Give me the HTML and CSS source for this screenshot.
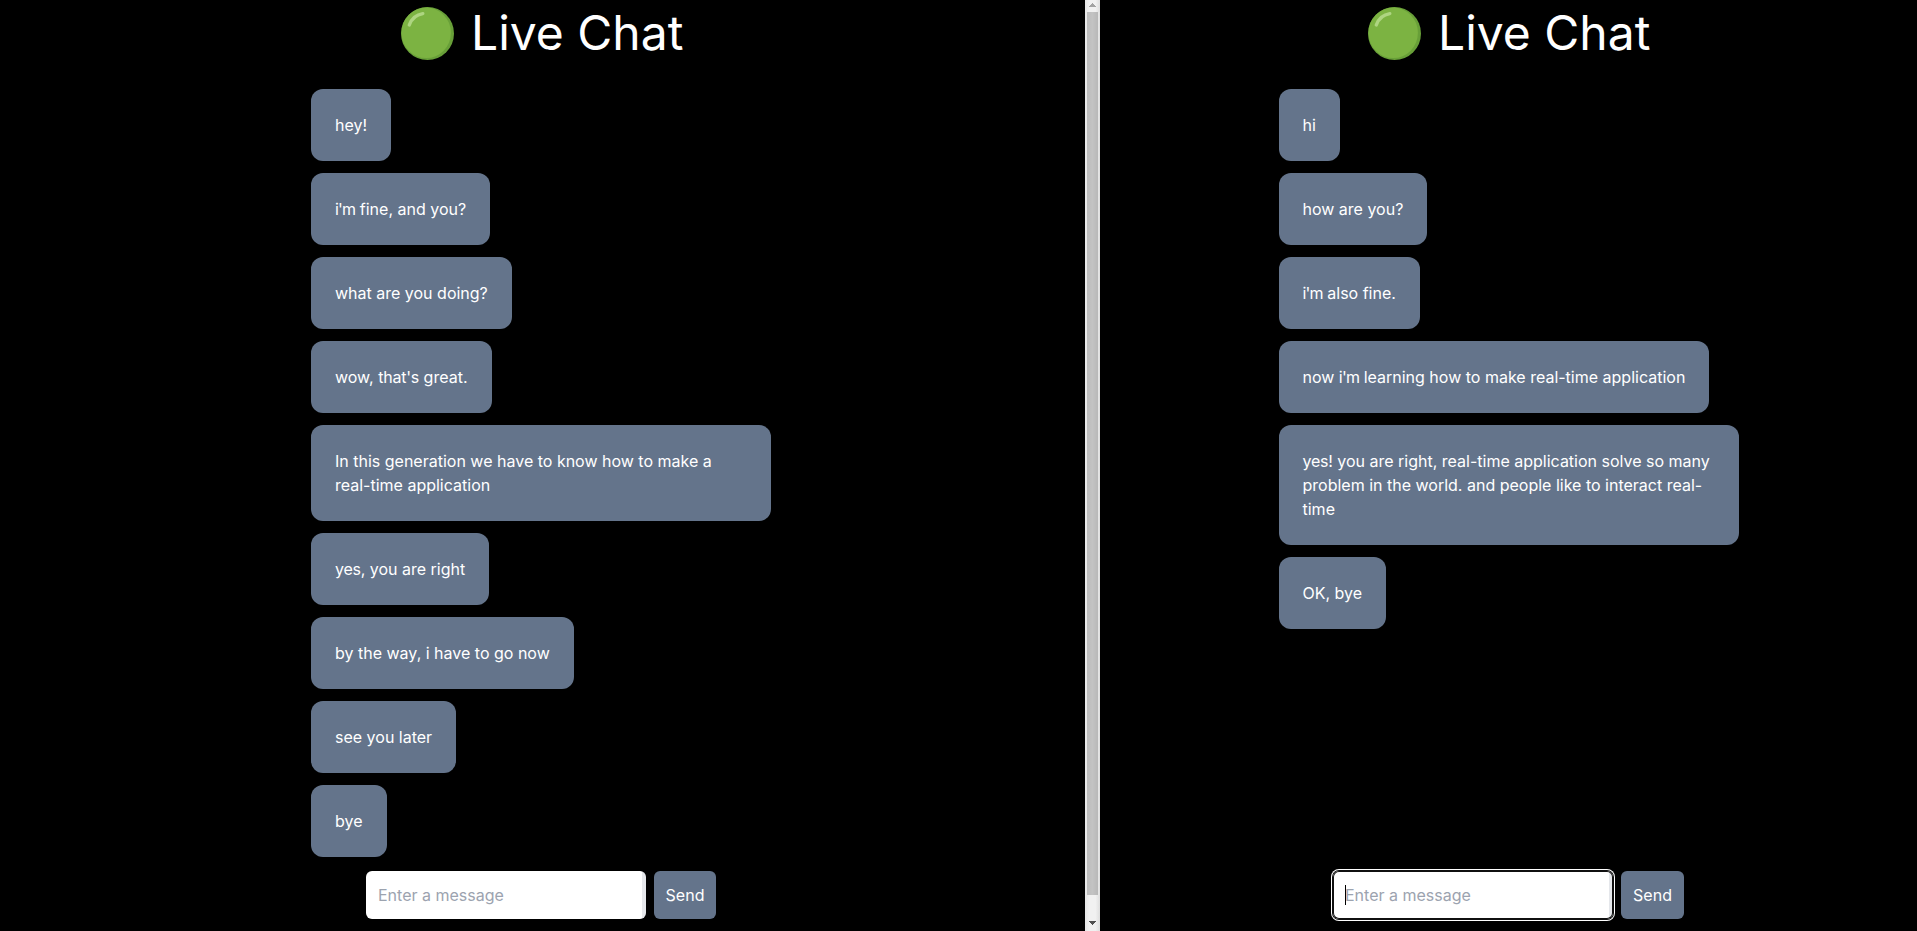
FILE: index.html
```html
<!DOCTYPE html>
<html lang="en">
<head>
<meta charset="utf-8">
<title>Live Chat</title>
<link rel="stylesheet" href="styles.css">
</head>
<body>
<main class="split">
  <section class="chat chat-left">
    <h1 class="title">
      <svg class="dot" viewBox="0 0 53 53"><circle cx="26.5" cy="26.5" r="26.5" fill="#689f38"/><ellipse cx="25.2" cy="25.8" rx="24.7" ry="25.3" fill="#7cb342"/><path d="M8.3 18 C10.5 12 15 7.6 21.8 6.6" fill="none" stroke="#aed581" stroke-width="3.4" stroke-linecap="round"/></svg>
      <span>Live Chat</span>
    </h1>
    <div class="messages">
      <p class="bubble">hey!</p>
      <p class="bubble"><span class="tight">i'm</span> fine, and you?</p>
      <p class="bubble">what are you doing?</p>
      <p class="bubble">wow, <span class="snug">that's</span> great.</p>
      <p class="bubble">In this generation we have to know how to make a real-time application</p>
      <p class="bubble"><span class="snug">yes,</span> you are right</p>
      <p class="bubble">by the way, i have to go now</p>
      <p class="bubble">see you later</p>
      <p class="bubble">bye</p>
    </div>
    <div class="composer">
      <div class="field">Enter a message</div>
      <button class="send">Send</button>
    </div>
  </section>
  <div class="scrollbar">
    <svg class="arrow" viewBox="0 0 15 12" shape-rendering="crispEdges"><path d="M7 3h1v1h1v1h1v1h1v1H4V6h1V5h1V4h1z" fill="#a3a3a3"/></svg>
    <div class="thumb"></div>
    <svg class="arrow arrow-down" viewBox="0 0 15 12" shape-rendering="crispEdges"><path d="M4 4h7v1h-1v1H9v1H8v1H7V7H6V6H5V5H4z" fill="#505050"/></svg>
  </div>
  <section class="chat chat-right">
    <h1 class="title">
      <svg class="dot" viewBox="0 0 53 53"><circle cx="26.5" cy="26.5" r="26.5" fill="#689f38"/><ellipse cx="25.2" cy="25.8" rx="24.7" ry="25.3" fill="#7cb342"/><path d="M8.3 18 C10.5 12 15 7.6 21.8 6.6" fill="none" stroke="#aed581" stroke-width="3.4" stroke-linecap="round"/></svg>
      <span>Live Chat</span>
    </h1>
    <div class="messages">
      <p class="bubble">hi</p>
      <p class="bubble">how are you?</p>
      <p class="bubble"><span class="tight">i'm</span> also fine.</p>
      <p class="bubble">now <span class="tight">i'm</span> learning how to make real-time application</p>
      <p class="bubble"><span class="snug">yes!</span> you are right, real-time application solve so many problem in the world. and people like to interact real-time</p>
      <p class="bubble">OK, bye</p>
    </div>
    <div class="composer">
      <div class="field focused"><i class="caret"></i>Enter a message</div>
      <button class="send">Send</button>
    </div>
  </section>
</main>
</body>
</html>
```
FILE: styles.css
```css
* { box-sizing: border-box; margin: 0; }
body {
  background: #000;
  color: #fff;
  font: 16px/24px Inter, "Noto Sans", sans-serif;
  overflow: hidden;
}
.split { display: grid; grid-template-columns: 1085px 15px 817px; height: 931px; }
.chat { display: flex; flex-direction: column; padding-bottom: 12px; }
.title {
  display: flex;
  align-items: center;
  gap: 17px;
  height: 65px;
  margin-left: 401px;
  font-size: 48px;
  line-height: 65px;
  font-weight: 400;
  white-space: nowrap;
}
.chat-right .title { margin-left: 268px; }
.dot { width: 53px; height: 53px; margin-top: 2px; }
.messages {
  display: flex;
  flex-direction: column;
  align-items: flex-start;
  gap: 12px;
  width: 460px;
  margin: 24px 0 auto 311px;
}
.chat-right .messages { margin-left: 178.5px; }
.bubble { padding: 24px; border-radius: 12px; background: #64748b; }
.tight { letter-spacing: -0.8px; }
.snug { letter-spacing: -0.2px; }
.composer { display: flex; gap: 8px; margin-left: 366px; }
.chat-right .composer { margin-left: 233px; }
.field {
  position: relative;
  width: 280px;
  height: 48px;
  padding: 12px;
  border-radius: 6px;
  background: linear-gradient(to right, #fff 276px, #e5e7eb 276px);
  color: #9ca3af;
}
.focused { box-shadow: inset 0 0 0 1px #101010, 0 0 0 1px #101010, 0 0 0 2px #fff; }
.caret { position: absolute; left: 12px; top: 14px; width: 1px; height: 20px; background: #000; }
.send {
  width: 62px;
  height: 48px;
  padding: 0;
  border: 0;
  border-radius: 6px;
  background: #64748b;
  color: #fff;
  font: inherit;
}
.chat-right .send { width: 63px; }
.scrollbar {
  display: flex;
  flex-direction: column;
  background: linear-gradient(to right, #e6e6e6, #f1f1f1 30%, #f1f1f1 70%, #dedede);
}
.arrow { flex: none; width: 15px; height: 12px; }
.thumb { height: 883px; margin: 0 2px; background: linear-gradient(to right, #bcbcbc, #c3c3c3 50%, #b8b8b8); }
.arrow-down { margin-top: 22px; }
```
